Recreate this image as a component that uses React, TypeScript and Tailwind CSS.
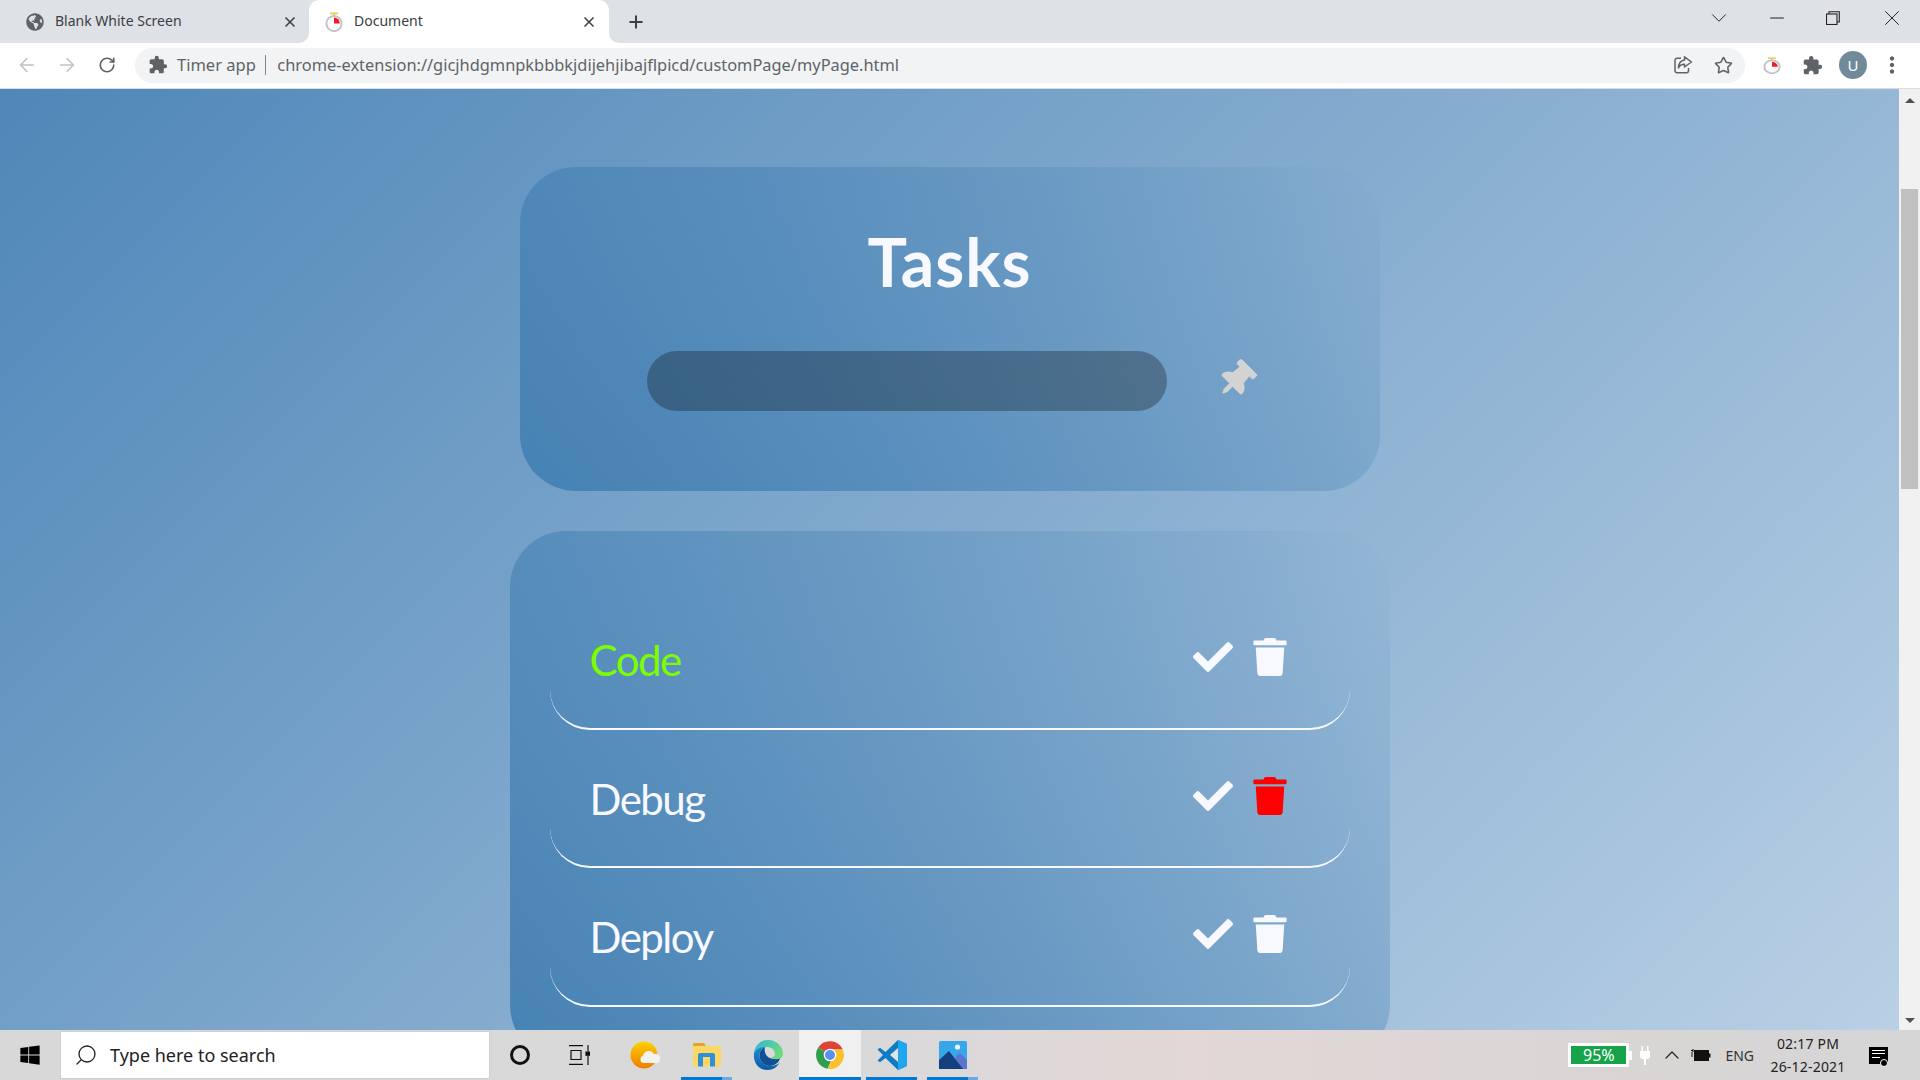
import { ArrowLeft, ArrowRight, ChevronDown, ChevronUp, Minus, Plus, RotateCw, Search, Star, X } from 'lucide-react';
import { FaCheck, FaGlobeAmericas, FaThumbtack, FaTrash, FaWindows } from 'react-icons/fa';
import { MdExtension, MdMoreVert } from 'react-icons/md';

const uiFont = "font-['Noto_Sans',sans-serif]";
const taskFont = "font-['Comic_Sans_MS','Lato',sans-serif]";

function TimerIcon({ width = 20, height = 20 }: { width?: number; height?: number }) {
  return (
    <svg width={width} height={height} viewBox="0 0 20 20" preserveAspectRatio="none">
      <rect x="6" y="0.5" width="8" height="1.8" fill="#f6c945" />
      <rect x="9" y="2" width="2" height="2" fill="#c9c9c9" />
      <circle cx="10" cy="11.5" r="7.6" fill="#fff" stroke="#c4c4c4" strokeWidth="2" />
      <path d="M10 11.5V5.5A6 6 0 0 1 15.8 11.5Z" fill="#ee1c25" />
    </svg>
  );
}

function ShareIcon() {
  return (
    <svg width="20" height="20" viewBox="0 0 20 20" fill="none" stroke="#5f6368" strokeWidth="1.5">
      <path d="M8 3.2H4a2 2 0 0 0-2 2v10.5a2 2 0 0 0 2 2h9.5a2 2 0 0 0 2-2V13" />
      <path d="M11.5 1.8 18.5 7l-7 5V9.3C8.5 9.3 6.6 10.5 5.5 13c0-4.5 2.300-7.500 6-8z" strokeLinejoin="round" />
    </svg>
  );
}

function TabCorners() {
  return (
    <>
      <div className="absolute bottom-0 -left-[10px] h-[10px] w-[10px] bg-white">
        <div className="h-full w-full rounded-br-[10px] bg-[#dee1e6]" />
      </div>
      <div className="absolute bottom-0 -right-[10px] h-[10px] w-[10px] bg-white">
        <div className="h-full w-full rounded-bl-[10px] bg-[#dee1e6]" />
      </div>
    </>
  );
}

function TitleBar() {
  return (
    <div className={`flex h-[43px] shrink-0 items-end bg-[#dee1e6] text-[#3c4043] ${uiFont}`}>
      <div className="flex h-[43px] w-[309px] items-center pl-[26px] pr-[11px]">
        <FaGlobeAmericas className="h-[18px] w-[18px] shrink-0 text-[#5f6368]" />
        <span className="mb-[2px] ml-[11px] flex-1 text-[14px]">Blank White Screen</span>
        <X className="h-[16px] w-[16px] text-[#3c4043]" strokeWidth={2.5} />
      </div>
      <div className="relative flex h-[43px] w-[300px] items-center rounded-t-[10px] bg-white pl-[15px] pr-[12px]">
        <TabCorners />
        <TimerIcon />
        <span className="mb-[2px] ml-[10px] flex-1 text-[14px]">Document</span>
        <X className="h-[16px] w-[16px]" strokeWidth={2.5} />
      </div>
      <div className="flex h-[43px] w-[54px] items-center justify-center">
        <Plus className="h-[20px] w-[20px]" strokeWidth={2.4} />
      </div>
      <div className="flex-1" />
      <div className="flex h-[43px] items-center pb-[7px] text-[#222]">
        <ChevronDown className="mr-[34px] h-[26px] w-[26px]" strokeWidth={0.9} />
        <Minus className="mr-[38px] h-[22px] w-[22px]" strokeWidth={1.1} />
        <svg width="14" height="14" viewBox="0 0 14 14" fill="none" stroke="#222" strokeWidth="1.1" className="mr-[39px]">
          <rect x="0.5" y="3" width="10.5" height="10.500" />
          <path d="M3 3V.7h10.300V11H11" />
        </svg>
        <X className="mr-[15px] h-[26px] w-[26px]" strokeWidth={0.9} />
      </div>
    </div>
  );
}

function Toolbar() {
  return (
    <div className={`flex h-[46px] shrink-0 items-center border-b border-[#dadce0] bg-white pb-[1px] ${uiFont}`}>
      <ArrowLeft className="ml-[16px] h-[22px] w-[22px] text-[#bdc1c6]" strokeWidth={1.6} />
      <ArrowRight className="ml-[18px] h-[22px] w-[22px] text-[#bdc1c6]" strokeWidth={1.6} />
      <RotateCw className="ml-[20px] h-[18px] w-[18px] text-[#5f6368]" strokeWidth={2.2} />
      <div className="ml-[19px] flex h-[35px] w-[1610px] items-center rounded-full bg-[#f1f3f4] pl-[13px] pr-[12px]">
        <MdExtension className="h-[20px] w-[20px] text-[#5f6368]" />
        <span className="ml-[9px] text-[16.5px] text-[#5f6368]">Timer app</span>
        <span className="ml-[9px] h-[20px] w-[1.5px] bg-[#80868b]" />
        <span className="ml-[11px] flex-1 text-[16.4px] text-[#5f6368]">
          chrome-extension://gicjhdgmnpkbbbkjdijehjibajflpicd/customPage/myPage.html
        </span>
        <ShareIcon />
        <Star className="ml-[21px] h-[19px] w-[19px] text-[#5f6368]" strokeWidth={2} />
      </div>
      <div className="ml-[17px] flex">
        <TimerIcon width={20} height={17} />
      </div>
      <MdExtension className="ml-[20px] h-[21px] w-[21px] text-[#5f6368]" />
      <div className="ml-[16px] flex h-[28px] w-[28px] items-center justify-center rounded-full bg-[#6f8b9a] text-[15px] text-white">U</div>
      <MdMoreVert className="ml-[12px] h-[26px] w-[26px] text-[#5f6368]" />
    </div>
  );
}

function TaskRow({ name, done, danger }: { name: string; done?: boolean; danger?: boolean }) {
  return (
    <li className="flex h-[138.5px] items-start justify-between rounded-[40px] border-b-2 border-[#f8f8ff] pl-[40px] pr-[61px]">
      <span className={`pt-[40px] text-[42px] leading-[58px] tracking-[-1.5px] ${taskFont} ${done ? 'text-[#7cfc00]' : 'text-[#f8f8ff]'}`}>{name}</span>
      <div className="flex items-center gap-[18px] pt-[46px]">
        <FaCheck className="h-[40px] w-[40px] text-[#f8f8ff]" />
        <FaTrash className={`h-[38px] w-[38px] ${danger ? 'text-[#ff0000]' : 'text-[#f8f8ff]'}`} />
      </div>
    </li>
  );
}

function Scrollbar() {
  return (
    <div className="flex w-[21px] shrink-0 flex-col items-center bg-[#f1f1f1]">
      <div className="mt-[9px] h-0 w-0 border-x-[5px] border-b-[5px] border-x-transparent border-b-[#505050]" />
      <div className="mt-[86px] h-[300px] w-[17px] bg-[#c1c1c1]" />
      <div className="mt-auto mb-[7px] h-0 w-0 border-x-[5px] border-t-[5px] border-x-transparent border-t-[#505050]" />
    </div>
  );
}

function Page() {
  return (
    <div className="flex min-h-0 flex-1">
      <main className="flex-1 overflow-hidden bg-[linear-gradient(135deg,#4f87b8,#b9d0e5)]">
        <section className="mx-auto mt-[78px] flex h-[324px] w-[860px] flex-col items-center rounded-[56px] bg-[linear-gradient(45deg,#4682b4,transparent)]">
          <h1 className={`mt-[50px] text-[66px] font-bold leading-[90px] tracking-[1px] text-[#f8f8ff] ${taskFont}`}>Tasks</h1>
          <div className="mt-[44px] flex w-[605px] items-center">
            <div className="h-[60px] w-[520px] shrink-0 rounded-[30px] bg-[#00000047]" />
            <FaThumbtack className="-mt-[3px] ml-[50px] h-[38px] w-[38px] shrink-0 rotate-45 text-[#d3d3d3]" />
          </div>
        </section>
        <section className="mx-auto mt-[40px] h-[530px] w-[880px] rounded-[56px] bg-[linear-gradient(45deg,#4682b4,transparent)] px-[40px] pt-[60px]">
          <ul>
            <TaskRow name="Code" done />
            <TaskRow name="Debug" danger />
            <TaskRow name="Deploy" />
          </ul>
        </section>
      </main>
      <Scrollbar />
    </div>
  );
}

function TaskCell({ children, active, open, pair }: { children: React.ReactNode; active?: boolean; open?: boolean; pair?: boolean }) {
  return (
    <div className={`relative flex h-[50px] w-[61.7px] items-center justify-center ${active ? 'bg-[#f0f0f0]' : ''}`}>
      {children}
      {active && <div className="absolute inset-x-0 bottom-0 h-[3px] bg-[#0078d4]" />}
      {open && (
        <div className="absolute bottom-0 left-[5px] flex h-[3px] w-[51px]">
          <div className={`h-full bg-[#0078d4] ${pair ? 'w-[41px]' : 'w-full'}`} />
          {pair && <div className="h-full flex-1 bg-[#69a9e4]" />}
        </div>
      )}
    </div>
  );
}

function Taskbar() {
  return (
    <footer className={`flex h-[50px] shrink-0 items-center bg-[linear-gradient(90deg,#d8d8d8,#d9d9da_45%,#e3d7d7_62%,#d9d5d5_85%,#d5d5d5)] ${uiFont}`}>
      <div className="flex w-[60px] items-center justify-center">
        <FaWindows className="h-[22px] w-[22px] text-black" />
      </div>
      <div className="flex h-[48px] w-[430px] items-center border border-[#cfcfcf] bg-white pl-[13px]">
        <Search className="h-[24px] w-[24px] -scale-x-100 text-[#222]" strokeWidth={1.3} />
        <span className="ml-[12px] text-[18px] text-[#222]">Type here to search</span>
      </div>
      <div className="flex w-[60px] items-center justify-center">
        <div className="h-[20px] w-[20px] rounded-full border-[3px] border-[#111]" />
      </div>
      <div className="flex w-[64px] items-center justify-center pr-[6px]">
        <svg width="22" height="20" viewBox="0 0 22 20" fill="none" stroke="#111" strokeWidth="1.2">
          <path d="M1 .6h14M1 19.400h14M3 5.500h10v9H3zM20 0v6M20 11v9" />
          <rect x="18" y="7" width="4" height="3.200" fill="#111" />
        </svg>
      </div>
      <TaskCell>
        <svg width="30" height="28" viewBox="0 0 30 28">
          <defs>
            <linearGradient id="sun" x1="0" y1="0" x2="0" y2="1">
              <stop offset="0" stopColor="#ffd000" />
              <stop offset="1" stopColor="#ef7d00" />
            </linearGradient>
          </defs>
          <circle cx="14" cy="14" r="13.500" fill="url(#sun)" />
          <path d="M13 22a4 4 0 0 1 0-7.500 6 6 0 0 1 11-1.500 5 5 0 0 1 4 9z" fill="#f4f2ee" />
        </svg>
      </TaskCell>
      <TaskCell open pair>
        <svg width="28" height="24" viewBox="0 0 28 24">
          <path d="M0 1.500A1.500 1.500 0 0 1 1.500 0H11l2 3H0z" fill="#e0a526" />
          <rect x="0" y="3" width="28" height="20.500" rx="1" fill="#fdd765" />
          <path d="M5 23.500V12a2 2 0 0 1 2-2h13a2 2 0 0 1 2 2v11.500h-5V14h-7v9.500z" fill="#2f8fd8" />
        </svg>
      </TaskCell>
      <TaskCell>
        <svg width="30" height="30" viewBox="0 0 30 30">
          <defs>
            <linearGradient id="edgeA" x1="0" y1="0" x2="1" y2="0.600">
              <stop offset="0" stopColor="#2bb6d8" />
              <stop offset="1" stopColor="#6fdc7a" />
            </linearGradient>
            <linearGradient id="edgeB" x1="0" y1="0" x2="0" y2="1">
              <stop offset="0" stopColor="#1e8ad6" />
              <stop offset="1" stopColor="#0c5ba8" />
            </linearGradient>
          </defs>
          <path d="M1 13C2 5 8 0 15 0c8 0 15 6 15 13.500 0 4-3 6-6.500 6-3 0-5-1.500-5-2.500 3 0 3.500-1.500 3.500-3C22 10 18.500 7 14 7 8 7 3 9 1 13z" fill="url(#edgeA)" />
          <path d="M1 13c2-4 6-6 11-6-4 1.500-5.500 5-5.500 8.500C6.500 21.500 11 26 17 26c5 0 8.500-2 10-4-2.500 5-7 8-12.500 8C6 30 0 23 1 13z" fill="url(#edgeB)" />
          <path d="M6.500 15.500C6.500 11 9 8 12 7c-1 3 0 9 5 11 3 1.500 7 1.500 10 .5-1 3.500-5 7.500-10 7.500-6 0-10.500-4.500-10.500-10.500z" fill="#0f4f96" />
        </svg>
      </TaskCell>
      <TaskCell active>
        <svg width="28" height="28" viewBox="0 0 28 28">
          <path d="M14 14 2.200 6.600A14 14 0 0 1 26.800 8.500H14z" fill="#db4437" />
          <path d="M14 14 2.200 6.600A14 14 0 0 0 11.500 27.800l5-11z" fill="#2f9e4f" />
          <path d="M14 14l2.500 2.800-5 11A14 14 0 0 0 26.800 8.500H14z" fill="#fbc02d" />
          <circle cx="14" cy="14" r="6.300" fill="#fff" />
          <circle cx="14" cy="14" r="5" fill="#5a8ff0" />
        </svg>
      </TaskCell>
      <TaskCell open>
        <svg width="30" height="30" viewBox="0 0 30 30">
          <path d="M21 0 8.500 12 3 7.800.5 9.500 6 15 .5 20.500 3 22.200 8.500 18 21 30l9-4V4z" fill="#0d7cc4" />
          <path d="M21 0l9 4v22l-9 4V8z" fill="#20a5f0" />
          <path d="M21 8 13 15l8 7z" fill="#e3e1e1" />
        </svg>
      </TaskCell>
      <TaskCell open pair>
        <svg width="28" height="28" viewBox="0 0 28 28">
          <rect width="28" height="28" rx="1.500" fill="#36a7e8" />
          <circle cx="18.500" cy="6" r="2.600" fill="#e8f6fd" />
          <path d="M17 15l4-3 7 7v9H17z" fill="#5976cf" />
          <path d="M0 28v-9l10-9 14 18z" fill="#163f80" />
        </svg>
      </TaskCell>
      <div className="flex-1" />
      <div className="flex h-[24px] w-[61px] items-center justify-center border-[3px] border-white bg-[#16a34a] text-[16px] text-white">95%</div>
      <div className="h-[9px] w-[3px] bg-white" />
      <svg width="10" height="19" viewBox="0 0 10 19" fill="#fff" className="ml-[8px]">
        <path d="M1.500 0h1.500v5H1.500zM7 0h1.500v5H7zM0 5h10v5a3 3 0 0 1-3 3H6v6H4v-6H3a3 3 0 0 1-3-3z" />
      </svg>
      <ChevronUp className="ml-[10px] mr-[6px] h-[24px] w-[24px] text-[#222]" strokeWidth={1.2} />
      <svg width="21" height="14" viewBox="0 0 21 14">
        <path d="M1 2.500h2M3 1v3M2 4v5" stroke="#111" strokeWidth="1" fill="none" />
        <rect x="4.500" y="2.500" width="14" height="10" fill="#111" stroke="#111" />
        <rect x="19" y="5.500" width="1.500" height="4" fill="#111" />
      </svg>
      <span className="ml-[14px] text-[14px] text-[#333]">ENG</span>
      <div className="ml-[14px] flex w-[80px] flex-col items-center text-[14px] leading-[23px] tracking-[0.2px] text-[#222]">
        <span>02:17 PM</span>
        <span>26-12-2021</span>
      </div>
      <div className="relative ml-[21px] mr-[32px] flex h-[17px] w-[19px] flex-col gap-[2.500px] bg-black px-[3px] pt-[3px]">
        <div className="h-[1px] bg-white" />
        <div className="h-[1px] bg-white" />
        <div className="h-[1px] w-[8px] bg-white" />
        <div className="absolute -bottom-[3px] right-[0px] h-[8px] w-[8px] rounded-full border border-white bg-black" />
      </div>
    </footer>
  );
}

export default function App() {
  return (
    <div className="flex h-screen w-screen flex-col overflow-hidden">
      <TitleBar />
      <Toolbar />
      <Page />
      <Taskbar />
    </div>
  );
}
